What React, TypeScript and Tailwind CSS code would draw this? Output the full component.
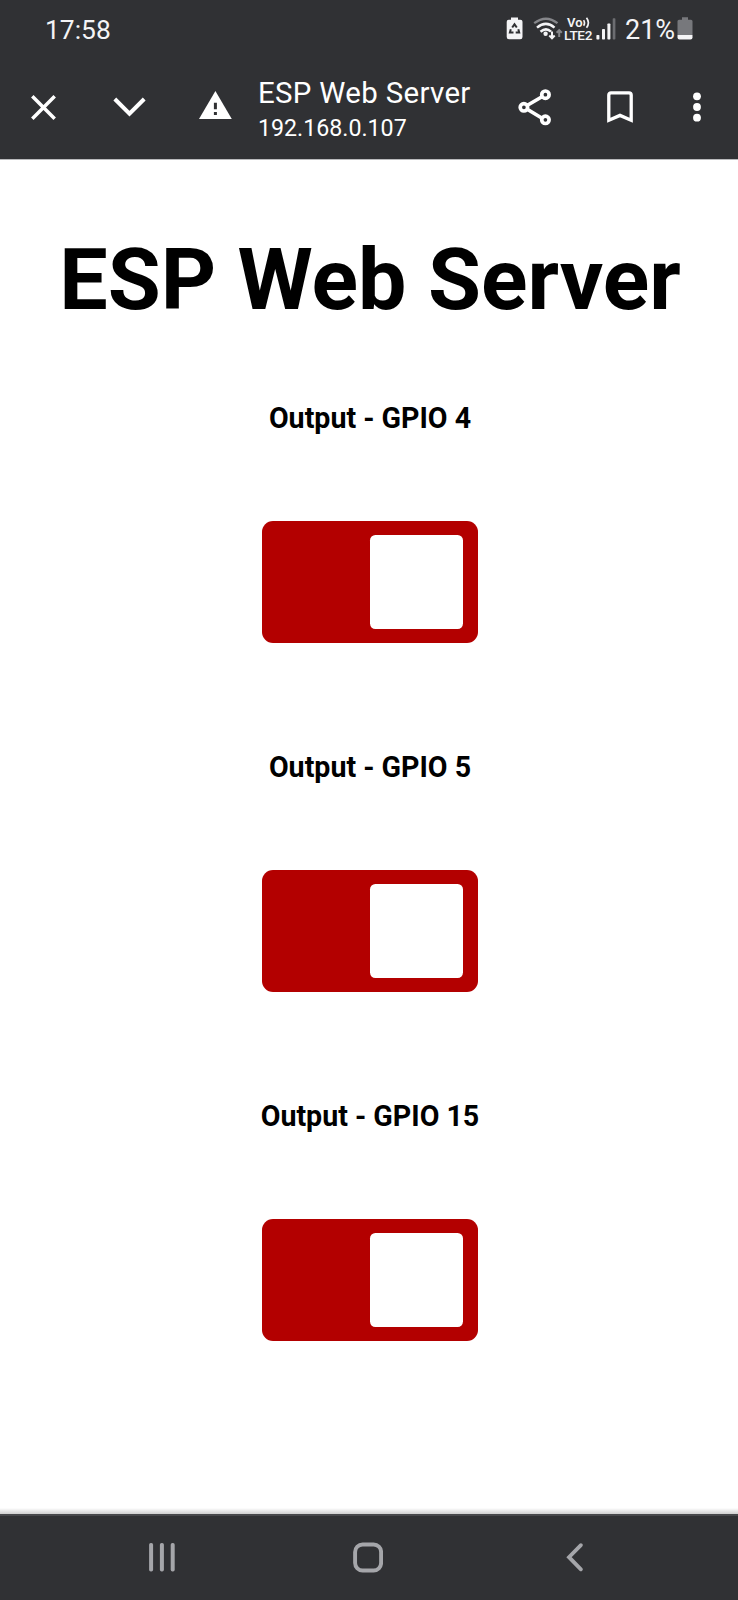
import React, { useState } from "react";

function StatusBar() {
  return (
    <div className="flex h-[60px] items-start pt-[14px] text-[#f4f4f6]">
      <span className="ml-[45px] w-[66px] whitespace-nowrap text-[26.4px] leading-[32px]">17:58</span>
      <svg className="ml-[395px] mt-[3px] shrink-0" width="17" height="23" viewBox="0 0 17 23">
        <path d="M5 0.5h7v2.3h2.5a2 2 0 0 1 2 2V20a2.3 2.3 0 0 1-2.3 2.3H3A2.3 2.3 0 0 1 .7 20V4.800a2 2 0 0 1 2-2H5z" fill="currentColor" />
        <g fill="none" stroke="#303134" strokeWidth="2">
          <path d="M6.200 10.500 8.500 7.300l2.300 3.200" />
          <path d="M4.800 12.200 3.900 15.500h3.600" />
          <path d="M12.300 12.200l.9 3.300H9.700" />
        </g>
      </svg>
      <svg className="ml-[10px] mt-[3px] shrink-0" width="30" height="25" viewBox="0 0 30 25" fill="none">
        <path d="M1.200 6.200Q13 -2.800 24.500 6.200" stroke="#85868a" strokeWidth="2.300" />
        <g stroke="currentColor" strokeWidth="2.500">
          <path d="M4 10.600Q13 3.200 21.500 10.600" />
          <path d="M7.500 14.800Q13 10 18 14.600" />
        </g>
        <circle cx="12.600" cy="16.700" r="2.200" fill="currentColor" />
        <path d="M19 14.500v6.500M16.300 18.500 19 21.300l2.700-2.800" stroke="currentColor" strokeWidth="2" />
        <path d="M26.200 20V13.500M23.600 15.800l2.600-2.700 2.600 2.700" stroke="#85868a" strokeWidth="2" />
      </svg>
      <div className="ml-[1px] mt-[3px] w-[29px] shrink-0 text-[#f4f4f6]">
        <div className="flex h-[12px] items-start pl-[3px]">
          <span className="text-[13px] font-semibold leading-[12px]">Vo</span>
          <svg className="shrink-0" width="8" height="12" viewBox="0 0 8 12" fill="none" stroke="currentColor" strokeWidth="1.700">
            <path d="M.6 3.200q1.800 2.800 0 5.500M3.500.8q3.800 5 0 10" />
          </svg>
        </div>
        <div className="whitespace-nowrap text-[13.600px] font-medium leading-[12px] tracking-[-0.300px]">LTE2</div>
      </div>
      <svg className="ml-[3px] mt-[4px] shrink-0" width="20" height="22" viewBox="0 0 20 22">
        <g fill="currentColor">
          <rect x=".4" y="17" width="3" height="4.500" rx=".7" />
          <rect x="6" y="11" width="3" height="10.500" rx=".7" />
          <rect x="11.400" y="5.500" width="3" height="16" rx=".7" />
        </g>
        <rect x="16.700" y=".3" width="2.700" height="21.200" rx=".7" fill="#6c6d71" />
      </svg>
      <span className="ml-[9px] w-[51px] whitespace-nowrap text-[27px] leading-[32px]">21%</span>
      <svg className="ml-[1px] mt-[3px] shrink-0" width="16" height="23" viewBox="0 0 16 23">
        <path d="M5 .3h6v2.500h3a1.500 1.500 0 0 1 1.500 1.500V18H.5V4.300A1.500 1.500 0 0 1 2 2.800h3z" fill="#77787c" />
        <path d="M.5 18h15v2.500a2 2 0 0 1-2 2h-11a2 2 0 0 1-2-2z" fill="currentColor" />
      </svg>
    </div>
  );
}

function Toolbar() {
  return (
    <div className="flex h-[99px] items-start text-white">
      <svg className="ml-[30px] mt-[34px] shrink-0" width="27" height="27" viewBox="0 0 27 27">
        <path d="M2.300 2.300 24.700 24.700M24.700 2.300 2.300 24.700" stroke="currentColor" strokeWidth="3.500" />
      </svg>
      <svg className="ml-[56px] mt-[36px] shrink-0" width="33" height="22" viewBox="0 0 33 22">
        <path d="M1.800 3 16.500 17.700 31.200 3" fill="none" stroke="currentColor" strokeWidth="4" />
      </svg>
      <svg className="ml-[53px] mt-[31px] shrink-0" width="33" height="28" viewBox="0 0 33 28">
        <path d="M16.400 0 32.800 28H0z" fill="currentColor" />
        <path d="M14.900 11.700h3v6.500h-3zM14.900 21h3v3h-3z" fill="#303134" />
      </svg>
      <div className="ml-[26px] w-[226px] pt-[15px]">
        <div className="whitespace-nowrap text-[29.400px] leading-[36px] tracking-[0.340px]">ESP Web Server</div>
        <div className="whitespace-nowrap text-[23.200px] leading-[34px]">192.168.0.107</div>
      </div>
      <svg className="ml-[34px] mt-[28px] shrink-0" width="34" height="38" viewBox="0 0 34 38" fill="none" stroke="currentColor">
        <path d="M27 7 6 19.300 27 32" strokeWidth="3.600" />
        <circle cx="27.400" cy="6.700" r="3.700" fill="#303134" strokeWidth="3.700" />
        <circle cx="5.900" cy="19.300" r="3.700" fill="#303134" strokeWidth="3.700" />
        <circle cx="27.400" cy="31.800" r="3.700" fill="#303134" strokeWidth="3.700" />
      </svg>
      <svg className="ml-[55px] mt-[31px] shrink-0" width="26" height="33" viewBox="0 0 26 33" fill="none" stroke="currentColor" strokeWidth="3.300">
        <path d="M1.800 29.300V4a2.200 2.200 0 0 1 2.200-2.200h18A2.200 2.200 0 0 1 24.200 4v25.300L13 24.400z" />
      </svg>
      <svg className="ml-[60px] mt-[32px] shrink-0" width="8" height="30" viewBox="0 0 8 30" fill="currentColor">
        <circle cx="4" cy="4.300" r="3.900" />
        <circle cx="4" cy="15" r="3.900" />
        <circle cx="4" cy="25.700" r="3.900" />
      </svg>
    </div>
  );
}

function Output({ label }: { label: string }) {
  const [on, setOn] = useState(true);
  return (
    <section className="flex h-[349px] flex-col items-center">
      <h4 className="whitespace-nowrap text-[28.600px] font-bold leading-[34px] text-black">{label}</h4>
      <button
        type="button"
        role="switch"
        aria-checked={on}
        aria-label={label}
        onClick={() => setOn(!on)}
        className={
          "mt-[86px] flex h-[122px] w-[215.400px] items-center rounded-[11px] px-[14.400px] " +
          (on ? "justify-end bg-[#b30000]" : "justify-start bg-[#cccccc]")
        }
      >
        <span className="block h-[93.400px] w-[93.400px] rounded-[5.400px] bg-white" />
      </button>
    </section>
  );
}

function NavigationBar() {
  return (
    <nav className="flex h-[86px] shrink-0 items-start border-t-2 border-[#47484b] bg-[#303134] text-[#a5a6aa]">
      <svg className="ml-[149px] mt-[26px] shrink-0" width="26" height="30" viewBox="0 0 26 30" fill="currentColor">
        <rect x=".1" y="1" width="4" height="28.500" rx="1.700" />
        <rect x="10.900" y="1" width="4" height="28.500" rx="1.700" />
        <rect x="21.700" y="1" width="4" height="28.500" rx="1.700" />
      </svg>
      <svg className="ml-[178px] mt-[26px] shrink-0" width="30" height="31" viewBox="0 0 30 31">
        <rect x="2.100" y="2.500" width="26" height="26" rx="7.500" fill="none" stroke="currentColor" strokeWidth="3.900" />
      </svg>
      <svg className="ml-[182px] mt-[26px] shrink-0" width="20" height="30" viewBox="0 0 20 30">
        <path d="M15.900 3.200 4 15.200 15.900 27.300" fill="none" stroke="currentColor" strokeWidth="3.800" strokeLinecap="round" />
      </svg>
    </nav>
  );
}

export default function App() {
  return (
    <div className="flex h-[1600px] w-[738px] flex-col overflow-hidden bg-white font-['Roboto',sans-serif]">
      <header className="h-[160px] shrink-0 border-b border-[#b9babc] bg-[#303134]">
        <StatusBar />
        <Toolbar />
      </header>
      <main className="flex flex-1 flex-col items-center pl-[2px] pt-[70px]">
        <h1 className="whitespace-nowrap text-[86.100px] font-bold leading-[100px] text-black">ESP Web Server</h1>
        <div className="mt-[71px]">
          <Output label="Output - GPIO 4" />
          <Output label="Output - GPIO 5" />
          <Output label="Output - GPIO 15" />
        </div>
      </main>
      <div className="h-[6px] shrink-0 bg-linear-to-b from-white to-[#cfcfcf]" />
      <NavigationBar />
    </div>
  );
}
